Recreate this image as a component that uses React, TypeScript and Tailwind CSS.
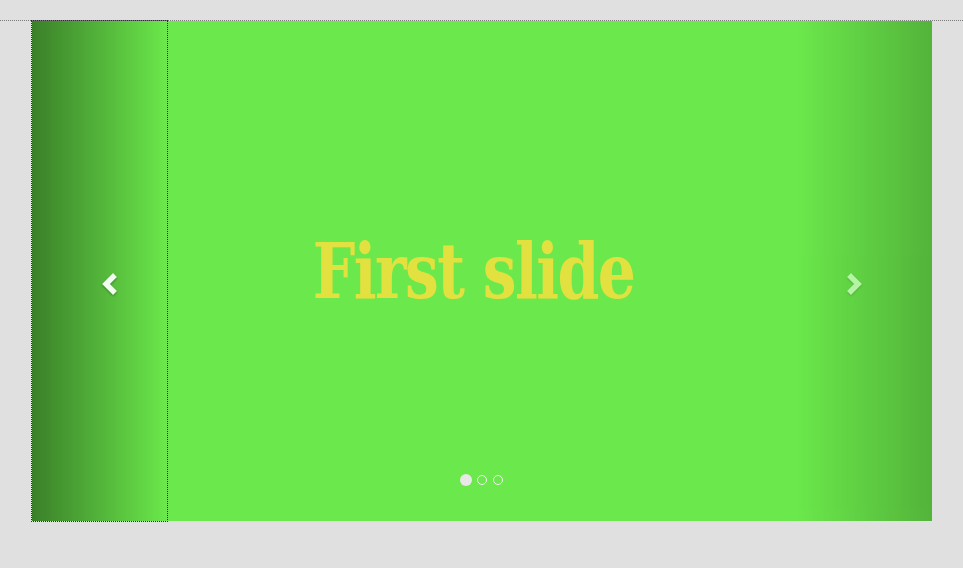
import React from 'react';

const Chevron = ({ dir }: { dir: 'left' | 'right' }) => (
  <svg width="18" height="24" viewBox="0 0 18 24" className="drop-shadow-[0_1px_1px_rgba(0,0,0,0.4)]">
    <polyline
      points={dir === 'left' ? '14,3 5,12 14,21' : '4,3 13,12 4,21'}
      fill="none"
      stroke="white"
      strokeWidth="5.5"
      strokeLinejoin="miter"
      strokeLinecap="butt"
    />
  </svg>
);

export default function App() {
  const slides = ['First slide', 'Second slide', 'Third slide'];
  const active = 0;

  return (
    <div className="min-h-[568px] w-full bg-[#e0e0e0]">
      <div className="h-[21px] border-b border-dotted border-[#7a7a7a]" />
      <div className="pl-[32px]">
        <div className="relative h-[500px] w-[900px] overflow-visible bg-[#6be84b]">
          <div className="flex h-full items-center justify-center pr-[16px] pt-[2px]">
            <h1 className="text-[76px] font-bold leading-none text-[#e2e13f] [font-family:'DejaVu_Serif',serif]">
              <span className="inline-block origin-center [transform:scaleX(0.79)] tracking-[-2px]">{slides[active]}</span>
            </h1>
          </div>

          <a className="absolute left-0 top-0 flex h-full w-[135px] items-center justify-end bg-gradient-to-r from-black/50 to-transparent pr-[48px] pt-[26px] opacity-90 outline-1 outline-dotted outline-[#1a1a1a]">
            <Chevron dir="left" />
          </a>
          <a className="absolute right-0 top-0 flex h-full w-[135px] items-center justify-start bg-gradient-to-l from-black/45 to-transparent pl-[48px] pt-[26px] opacity-50">
            <Chevron dir="right" />
          </a>

          <ol className="absolute bottom-[35px] left-0 flex w-full items-center justify-center gap-[4px]">
            {slides.map((s, i) =>
              i === active ? (
                <li key={s} className="h-[12px] w-[12px] rounded-full bg-[#e8e8e8]" />
              ) : (
                <li key={s} className="mx-[1px] h-[10px] w-[10px] rounded-full border border-[#f0f0f0]" />
              )
            )}
          </ol>
        </div>
      </div>
    </div>
  );
}
